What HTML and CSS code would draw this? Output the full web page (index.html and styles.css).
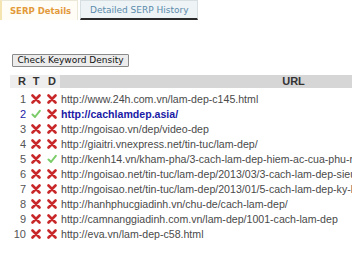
FILE: index.html
```html
<!DOCTYPE html>
<html>
<head>
<meta charset="utf-8">
<link rel="stylesheet" href="styles.css">
</head>
<body>
<div class="page">
  <div class="tabs">
    <div class="tab active">SERP Details</div>
    <div class="tab">Detailed SERP History</div>
  </div>
  <div class="actions">
    <button class="btn">Check Keyword Density</button>
  </div>
  <div class="tablewrap">
    <table class="serp">
      <thead>
        <tr>
          <th class="c-r">R</th>
          <th class="c-i">T</th>
          <th class="c-i">D</th>
          <th class="c-url">URL</th>
        </tr>
      </thead>
      <tbody>
        <tr><td class="c-r">1</td><td class="c-i"><svg class="ic" viewBox="0 0 10 10"><path d="M1.5 1.5L8.5 8.5M8.5 1.5L1.5 8.5"/></svg></td><td class="c-i"><svg class="ic" viewBox="0 0 10 10"><path d="M1.5 1.5L8.5 8.5M8.5 1.5L1.5 8.5"/></svg></td><td class="c-url">http://www.24h.com.vn/lam-dep-c145.html</td></tr>
        <tr class="hit"><td class="c-r">2</td><td class="c-i"><svg class="ok" viewBox="0 0 10 10"><path d="M1.5 5.5L4 8L8.8 1.8"/></svg></td><td class="c-i"><svg class="ic" viewBox="0 0 10 10"><path d="M1.5 1.5L8.5 8.5M8.5 1.5L1.5 8.5"/></svg></td><td class="c-url">http://cachlamdep.asia/</td></tr>
        <tr><td class="c-r">3</td><td class="c-i"><svg class="ic" viewBox="0 0 10 10"><path d="M1.5 1.5L8.5 8.5M8.5 1.5L1.5 8.5"/></svg></td><td class="c-i"><svg class="ic" viewBox="0 0 10 10"><path d="M1.5 1.5L8.5 8.5M8.5 1.5L1.5 8.5"/></svg></td><td class="c-url">http://ngoisao.vn/dep/video-dep</td></tr>
        <tr><td class="c-r">4</td><td class="c-i"><svg class="ic" viewBox="0 0 10 10"><path d="M1.5 1.5L8.5 8.5M8.5 1.5L1.5 8.5"/></svg></td><td class="c-i"><svg class="ic" viewBox="0 0 10 10"><path d="M1.5 1.5L8.5 8.5M8.5 1.5L1.5 8.5"/></svg></td><td class="c-url">http://giaitri.vnexpress.net/tin-tuc/lam-dep/</td></tr>
        <tr><td class="c-r">5</td><td class="c-i"><svg class="ic" viewBox="0 0 10 10"><path d="M1.5 1.5L8.5 8.5M8.5 1.5L1.5 8.5"/></svg></td><td class="c-i"><svg class="ok" viewBox="0 0 10 10"><path d="M1.5 5.5L4 8L8.8 1.8"/></svg></td><td class="c-url">http://kenh14.vn/kham-pha/3-cach-lam-dep-hiem-ac-cua-phu-nu-han-quoc.chn</td></tr>
        <tr><td class="c-r">6</td><td class="c-i"><svg class="ic" viewBox="0 0 10 10"><path d="M1.5 1.5L8.5 8.5M8.5 1.5L1.5 8.5"/></svg></td><td class="c-i"><svg class="ic" viewBox="0 0 10 10"><path d="M1.5 1.5L8.5 8.5M8.5 1.5L1.5 8.5"/></svg></td><td class="c-url">http://ngoisao.net/tin-tuc/lam-dep/2013/03/3-cach-lam-dep-sieu-re.html</td></tr>
        <tr><td class="c-r">7</td><td class="c-i"><svg class="ic" viewBox="0 0 10 10"><path d="M1.5 1.5L8.5 8.5M8.5 1.5L1.5 8.5"/></svg></td><td class="c-i"><svg class="ic" viewBox="0 0 10 10"><path d="M1.5 1.5L8.5 8.5M8.5 1.5L1.5 8.5"/></svg></td><td class="c-url">http://ngoisao.net/tin-tuc/lam-dep/2013/01/5-cach-lam-dep-ky-la.html</td></tr>
        <tr><td class="c-r">8</td><td class="c-i"><svg class="ic" viewBox="0 0 10 10"><path d="M1.5 1.5L8.5 8.5M8.5 1.5L1.5 8.5"/></svg></td><td class="c-i"><svg class="ic" viewBox="0 0 10 10"><path d="M1.5 1.5L8.5 8.5M8.5 1.5L1.5 8.5"/></svg></td><td class="c-url">http://hanhphucgiadinh.vn/chu-de/cach-lam-dep/</td></tr>
        <tr><td class="c-r">9</td><td class="c-i"><svg class="ic" viewBox="0 0 10 10"><path d="M1.5 1.5L8.5 8.5M8.5 1.5L1.5 8.5"/></svg></td><td class="c-i"><svg class="ic" viewBox="0 0 10 10"><path d="M1.5 1.5L8.5 8.5M8.5 1.5L1.5 8.5"/></svg></td><td class="c-url">http://camnanggiadinh.com.vn/lam-dep/1001-cach-lam-dep</td></tr>
        <tr><td class="c-r">10</td><td class="c-i"><svg class="ic" viewBox="0 0 10 10"><path d="M1.5 1.5L8.5 8.5M8.5 1.5L1.5 8.5"/></svg></td><td class="c-i"><svg class="ic" viewBox="0 0 10 10"><path d="M1.5 1.5L8.5 8.5M8.5 1.5L1.5 8.5"/></svg></td><td class="c-url">http://eva.vn/lam-dep-c58.html</td></tr>
      </tbody>
    </table>
  </div>
</div>
</body>
</html>
```

FILE: styles.css
```css
html, body {
  margin: 0;
  padding: 0;
  background: #ffffff;
}

.page {
  width: 352px;
  height: 280px;
  overflow: hidden;
}

.tabs {
  display: flex;
  height: 20px;
}

.tab {
  box-sizing: border-box;
  height: 20px;
  padding: 0 8px 0 9px;
  display: flex;
  align-items: center;
  white-space: nowrap;
  font-family: "DejaVu Sans", Verdana, sans-serif;
  font-size: 9px;
  color: #5b8bab;
  background: #eef3f6;
  border: 1px solid #d8dfe3;
  border-bottom: 2px solid #2a2a2a;
  margin-left: 2px;
}

.tab.active {
  margin-left: 0;
  width: 78px;
  padding: 0 0 0 8px;
  font-size: 8.5px;
  font-weight: bold;
  color: #e39a3a;
  background: #fffdf6;
  border: 1px solid #ece8d8;
  border-left: 2px solid #f3e4b0;
  border-bottom: none;
}

.actions {
  padding: 29px 0 0 12px;
  height: 14px;
}

.btn {
  box-sizing: border-box;
  height: 13px;
  width: 117px;
  padding: 0;
  margin: 0;
  font-family: "DejaVu Sans", Verdana, sans-serif;
  font-size: 9px;
  line-height: 11px;
  color: #111;
  background: #ececec;
  border: 1px solid #8a8a8a;
  border-radius: 1px;
}

.tablewrap {
  padding: 12px 0 0 10px;
}

.serp {
  border-collapse: collapse;
  width: 516px;
  font-family: "Liberation Sans", Arial, sans-serif;
  font-size: 10.6px;
}

.serp th {
  height: 13px;
  padding: 0;
  font-weight: bold;
  font-size: 11px;
  color: #333;
  background: #eeeeee;
  border-bottom: 4px solid #fff;
  line-height: 13px;
}

.serp th.c-url {
  background: #d6d6d6;
  text-align: center;
}

.serp td {
  height: 15px;
  padding: 0;
  line-height: 15px;
  color: #555;
  white-space: nowrap;
}

.c-r {
  width: 16px;
  text-align: right;
  padding-right: 2px !important;
}

.serp td.c-r {
  color: #555;
  font-size: 11px;
}

.c-i {
  width: 16px;
  text-align: center;
}

.c-url {
  padding-left: 1px !important;
  text-align: left;
}

.serp td.c-url {
  color: #4a4a4a;
}

.hit td.c-url {
  font-weight: bold;
  color: #1a1aa6;
}

.hit td.c-r {
  color: #1a1aa6;
}

.ic, .ok {
  width: 10px;
  height: 10px;
  vertical-align: -1px;
}

.ic path {
  stroke: #c8282a;
  stroke-width: 2.6;
  stroke-linecap: round;
  fill: none;
}

.ok path {
  stroke: #7ccc6a;
  stroke-width: 2;
  stroke-linecap: round;
  stroke-linejoin: round;
  fill: none;
}
```
